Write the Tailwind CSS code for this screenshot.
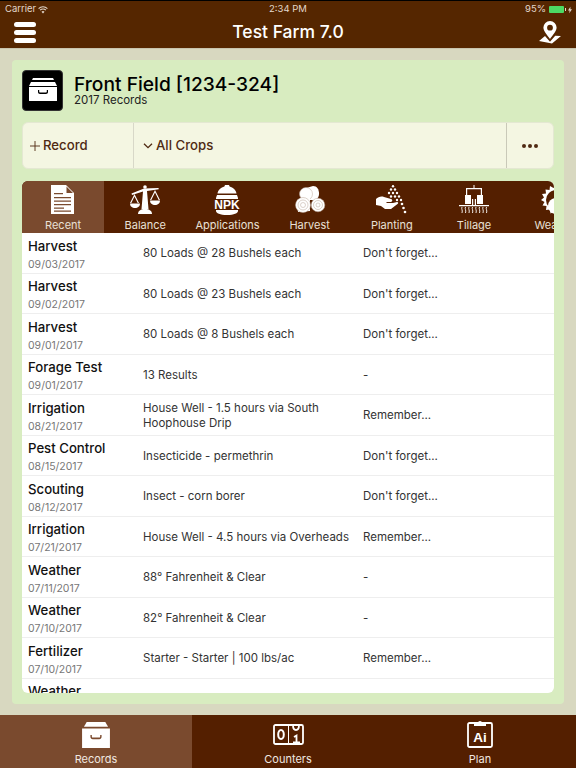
<!DOCTYPE html>
<html lang="en">
<head>
  <meta charset="UTF-8">
  <meta name="viewport" content="width=device-width, initial-scale=1.0">
  <title>Test Farm 7.0</title>
  <script src="https://cdn.jsdelivr.net/npm/@tailwindcss/browser@4"></script>
</head>
<body class="w-[576px] h-[768px] overflow-hidden flex flex-col bg-[#d8d8c0] font-['Inter',sans-serif]">
  <!-- top bar -->
  <header class="h-[48px] shrink-0 bg-[#552600] border-t border-black text-white flex flex-col shadow-[0_1px_0_#c9c4ae]">
    <div class="h-[16px] pt-[1px] flex items-center justify-between pl-[5px] pr-[4px] text-[9.5px] text-[#e2d8cc] relative">
      <div class="flex items-center gap-[2px]">
        <span>Carrier</span>
        <svg width="10" height="8" viewBox="0 0 10 8" fill="none" stroke="#e2d8cc" stroke-width="1.100"><path d="M.6 2.600a6.200 6.200 0 0 1 8.800 0M2.100 4.200a4 4 0 0 1 5.800 0"/><path d="M5 7.600 3.500 5.800a2 2 0 0 1 3 0z" fill="#e2d8cc" stroke="none"/></svg>
      </div>
      <span class="absolute left-0 right-0 text-center">2:34 PM</span>
      <div class="flex items-center">
        <span class="mr-[3px]">95%</span>
        <div class="w-[15px] h-[7px] bg-[#4cd964] rounded-[1px]"></div>
        <div class="w-[1px] h-[3px] bg-[#e2d8cc] ml-[1px]"></div>
        <svg width="4" height="8" viewBox="0 0 5 8" class="ml-[2px]"><path d="M3 0 0 4.600h2L1.600 8 5 3.200H3z" fill="#e2d8cc"/></svg>
      </div>
    </div>
    <div class="flex-1 flex items-center justify-between pl-[14px] pr-[15px] relative">
      <div class="flex flex-col gap-[3px] w-[22px]">
        <div class="h-[5px] rounded-full bg-white"></div>
        <div class="h-[5px] rounded-full bg-white"></div>
        <div class="h-[5px] rounded-full bg-white"></div>
      </div>
      <h1 class="absolute left-0 right-0 text-center text-[17.5px] font-medium">Test Farm 7.0</h1>
      <svg width="22" height="23" viewBox="0 0 22 23" fill="#fff">
        <path fill-rule="evenodd" d="M11 0a6.600 6.600 0 0 0-6.600 6.600C4.400 10.600 9 15 11 18c2-3 6.600-7.400 6.600-11.400A6.600 6.600 0 0 0 11 0zm0 3.800a2.900 2.900 0 1 1 0 5.800 2.900 2.900 0 0 1 0-5.800z"/>
        <path d="M6 15 0 20l13 2.600 9-7.600-5.800-.2-5.200 6z"/>
      </svg>
    </div>
  </header>

  <main class="flex-1 min-h-0 pt-[12px] px-[12px] pb-[11px]">
    <section class="h-full bg-[#d8ecc0] rounded-[4px] px-[10px] pt-[10px] pb-[11px] flex flex-col">
      <!-- field title -->
      <div class="flex items-center gap-[11px] h-[40px] shrink-0">
        <div class="w-[41px] h-[41px] bg-black rounded-[4px] flex items-center justify-center border border-[#333]">
          <svg width="28" height="24" viewBox="0 0 28 24" fill="#fff">
            <path d="M4 0h20l1 2H3z"/>
            <path d="M2 4h24l2 4H0z"/>
            <path d="M0 9h28v14H0zm9 3v2c0 1 .8 2 2 2h6c1.200 0 2-1 2-2v-2h-1.200v1.500c0 .6-.4 1-1 1h-5.600c-.6 0-1-.4-1-1V12z" fill-rule="evenodd"/>
          </svg>
        </div>
        <div class="flex flex-col">
          <h2 class="text-[19.2px] leading-[22px] -mt-[1px] font-medium text-black">Front Field [1234-324]</h2>
          <p class="text-[11.5px] leading-[13px] -mt-[1px] text-[#222]">2017 Records</p>
        </div>
      </div>

      <!-- action bar -->
      <div class="mt-[12px] h-[47px] shrink-0 flex bg-[#f4f6e2] rounded-[6px] border border-[#e4e8d2] text-[#4f2a12] text-[13.2px] font-medium">
        <div class="w-[111px] flex items-center pl-[7px] gap-[3px] border-r border-[#d8d8c8]">
          <svg width="10" height="10" viewBox="0 0 11 11" stroke="#4f2a12" stroke-width="1"><path d="M5.500 0v11M0 5.500h11"/></svg>
          <span class="mt-[1px]">Record</span>
        </div>
        <div class="flex-1 flex items-center pl-[9px] gap-[3px] border-r border-[#c9c9b8]">
          <svg width="10" height="6" viewBox="0 0 10 6" fill="none" stroke="#4f2a12" stroke-width="1.300"><path d="m1 .7 4 4 4-4"/></svg>
          <span class="mt-[1px]">All Crops</span>
        </div>
        <div class="w-[46px] flex items-center justify-center gap-[2px]">
          <div class="w-[4px] h-[4px] rounded-full bg-[#4f2a12]"></div>
          <div class="w-[4px] h-[4px] rounded-full bg-[#4f2a12]"></div>
          <div class="w-[4px] h-[4px] rounded-full bg-[#4f2a12]"></div>
        </div>
      </div>

      <!-- record table -->
      <div class="mt-[12px] flex-1 min-h-0 rounded-[6px] overflow-hidden bg-white flex flex-col">
        <div class="h-[52px] shrink-0 bg-[#541f00] flex text-[#e9e0d6] text-[11px] overflow-hidden">
          <div class="w-[82.2px] shrink-0 bg-[#7a4a2e] flex flex-col items-center justify-between pt-[4px] pb-[1px]">
            <svg width="24" height="30" viewBox="0 0 24 30" fill="#fff">
              <path fill-rule="evenodd" d="M0 0h15l8 8v21H0zM15.500 1.500V8H22zM3 8v1.300h9V8zm0 4v1.300h17V12zm0 3.500v1.300h17v-1.300zm0 3.500v1.300h17V19zm0 3.500v1.300h10v-1.300zm0 3v1.300h17v-1.300z"/>
            </svg>
            <span class="leading-[14px]">Recent</span>
          </div>
          <div class="w-[82.2px] shrink-0 flex flex-col items-center justify-between pt-[4px] pb-[1px]">
            <svg width="30" height="30" viewBox="0 0 30 30" fill="#fff">
              <circle cx="15" cy="2" r="1.800"/>
              <path d="M1.500 8.500 14 3.500l14.500-.5.300 1.300L17 6l1.500 18h-7L13 6.500 2 10z"/>
              <path d="M8 29c0-3 2.500-5 7-5s7 2 7 5z"/>
              <path d="M4.500 9 0 18h1.300l3.200-6.500L7.700 18H9z"/>
              <path d="M0 18.500h10c0 2.800-2.200 4.500-5 4.500s-5-1.700-5-4.500z"/>
              <path d="M25 5l-5 10h1.300L25 7.500l3.700 7.500H30z"/>
              <path d="M20 15.500h10c0 2.800-2.200 4.500-5 4.500s-5-1.700-5-4.500z"/>
            </svg>
            <span class="leading-[14px]">Balance</span>
          </div>
          <div class="w-[82.2px] shrink-0 flex flex-col items-center justify-between pt-[4px] pb-[1px]">
            <svg width="28" height="30" viewBox="0 0 28 30" fill="#fff">
              <path d="M12 0h4l.6 1.500C20 2.500 23 5 23.500 8.500h-19C5 5 8 2.500 11.400 1.500z"/>
              <path d="M4 10h20l1 3v13c0 2-4 4-11 4S3 28 3 26V13z"/>
              <rect x="0" y="14" width="28" height="11" rx="1.500" fill="#541f00"/>
              <text x="14" y="23.500" text-anchor="middle" font-family="Liberation Sans" font-weight="700" font-size="12" fill="#fff">NPK</text>
            </svg>
            <span class="leading-[14px]">Applications</span>
          </div>
          <div class="w-[82.2px] shrink-0 flex flex-col items-center justify-between pt-[4px] pb-[1px]">
            <svg width="32" height="30" viewBox="0 0 32 30" fill="#fff" stroke="#b9a596" stroke-width="0.500">
              <path d="M9 4 19 1c4 0 6 3.500 6 7.500S23 15 19 15H10z" stroke="none"/>
              <circle cx="12" cy="9" r="6.500"/>
              <path d="M3 15 10 13h6v13l-12 1z" stroke="none"/>
              <circle cx="9" cy="20" r="7.500"/><circle cx="9" cy="20" r="5" fill="none"/><circle cx="9" cy="20" r="2.500" fill="none"/>
              <circle cx="24" cy="20" r="6.800"/><circle cx="24" cy="20" r="4.500" fill="none"/><circle cx="24" cy="20" r="2" fill="none"/>
            </svg>
            <span class="leading-[14px]">Harvest</span>
          </div>
          <div class="w-[82.2px] shrink-0 flex flex-col items-center justify-between pt-[4px] pb-[1px]">
            <svg width="32" height="30" viewBox="0 0 32 30" fill="#fff">
              <path d="M0 14c2-2 5-3 8-2l7 2c2 .5 1.500 3-.5 3H10l1 1h6l4-1c1.500 0 1.500 1.500.5 2L15 24H9l-4-3-5-1z"/>
              <circle cx="17" cy="1.300" r="1.200"/>
              <circle cx="15" cy="4.500" r="1.200"/><circle cx="19" cy="4.500" r="1.200"/>
              <circle cx="13" cy="8" r="1.200"/><circle cx="17" cy="8" r="1.200"/><circle cx="21" cy="8" r="1.200"/>
              <circle cx="15" cy="11.500" r="1.200"/><circle cx="19" cy="11.500" r="1.200"/><circle cx="23" cy="11.500" r="1.200"/>
              <circle cx="21" cy="15" r="1.200"/><circle cx="25" cy="15" r="1.200"/>
              <circle cx="26" cy="19" r="1.300"/><circle cx="27.500" cy="23" r="1.300"/><circle cx="29" cy="27" r="1.300"/>
            </svg>
            <span class="leading-[14px]">Planting</span>
          </div>
          <div class="w-[82.2px] shrink-0 flex flex-col items-center justify-between pt-[4px] pb-[1px]">
            <svg width="32" height="30" viewBox="0 0 32 30" fill="#fff">
              <path d="M15.500 0h1v3h-1z"/>
              <path d="M8 3h16v1.200H8zM8 4h1.200v6H8zM22.800 4H24v6h-1.200z"/>
              <path d="M7 10h6v9H7zM19 10h6v9h-6z"/>
              <path d="M14 14h1.200v6H14zM16.800 14H18v6h-1.200z"/>
              <path d="M1 20h30v1.300H1z"/>
              <path d="M4 22c-1 2 1 3 0 6M7.500 22c-1 2 1 3 0 6M11 22c-1 2 1 3 0 6M14.500 22c-1 2 1 3 0 6M18 22c-1 2 1 3 0 6M21.500 22c-1 2 1 3 0 6M25 22c-1 2 1 3 0 6M28.500 22c-1 2 1 3 0 6" stroke="#fff" stroke-width="0.900" fill="none"/>
            </svg>
            <span class="leading-[14px]">Tillage</span>
          </div>
          <div class="w-[82.2px] shrink-0 flex flex-col items-center justify-between pt-[4px] pb-[1px]">
            <svg width="30" height="30" viewBox="0 0 30 30" fill="#fff">
              <path d="M15 0l2 3.500 3.500-2 .5 4 4-.5-.5 4 4 .5-2 3.500 3 2.500-3 2.500 2 3.500-4 .5.500 4-4-.5-.5 4-3.500-2L15 30l-2-3.500-3.500 2-.5-4-4 .5.500-4-4-.5 2-3.500L0 15l3-2.500-2-3.500 4-.5-.5-4 4 .5.500-4 3.500 2z"/>
              <circle cx="15" cy="15" r="10" fill="#541f00"/>
              <circle cx="15" cy="21" r="8"/>
            </svg>
            <span class="leading-[14px] whitespace-nowrap">Weather</span>
          </div>
        </div>

        <div class="flex-1 min-h-0 overflow-hidden text-[11.5px] text-[#333]">
          <div class="h-[40.5px] pt-[2px] flex items-center border-b border-[#eeeeee]">
            <div class="w-[121px] shrink-0 pl-[6px] mt-[2px]"><p class="text-[13.2px] leading-[17px] font-medium text-[#111]">Harvest</p><p class="text-[10.5px] leading-[15px] mt-[2px] text-[#777]">09/03/2017</p></div>
            <div class="w-[220px] shrink-0 pr-[8px] leading-[15px]">80 Loads @ 28 Bushels each</div>
            <div>Don't forget...</div>
          </div>
          <div class="h-[40.5px] pt-[2px] flex items-center border-b border-[#eeeeee]">
            <div class="w-[121px] shrink-0 pl-[6px] mt-[2px]"><p class="text-[13.2px] leading-[17px] font-medium text-[#111]">Harvest</p><p class="text-[10.5px] leading-[15px] mt-[2px] text-[#777]">09/02/2017</p></div>
            <div class="w-[220px] shrink-0 pr-[8px] leading-[15px]">80 Loads @ 23 Bushels each</div>
            <div>Don't forget...</div>
          </div>
          <div class="h-[40.5px] pt-[2px] flex items-center border-b border-[#eeeeee]">
            <div class="w-[121px] shrink-0 pl-[6px] mt-[2px]"><p class="text-[13.2px] leading-[17px] font-medium text-[#111]">Harvest</p><p class="text-[10.5px] leading-[15px] mt-[2px] text-[#777]">09/01/2017</p></div>
            <div class="w-[220px] shrink-0 pr-[8px] leading-[15px]">80 Loads @ 8 Bushels each</div>
            <div>Don't forget...</div>
          </div>
          <div class="h-[40.5px] pt-[2px] flex items-center border-b border-[#eeeeee]">
            <div class="w-[121px] shrink-0 pl-[6px] mt-[2px]"><p class="text-[13.2px] leading-[17px] font-medium text-[#111]">Forage Test</p><p class="text-[10.5px] leading-[15px] mt-[2px] text-[#777]">09/01/2017</p></div>
            <div class="w-[220px] shrink-0 pr-[8px] leading-[15px]">13 Results</div>
            <div>-</div>
          </div>
          <div class="h-[40.5px] pt-[2px] flex items-center border-b border-[#eeeeee]">
            <div class="w-[121px] shrink-0 pl-[6px] mt-[2px]"><p class="text-[13.2px] leading-[17px] font-medium text-[#111]">Irrigation</p><p class="text-[10.5px] leading-[15px] mt-[2px] text-[#777]">08/21/2017</p></div>
            <div class="w-[220px] shrink-0 pr-[8px] leading-[15px]">House Well - 1.5 hours via South Hoophouse Drip</div>
            <div>Remember...</div>
          </div>
          <div class="h-[40.5px] pt-[2px] flex items-center border-b border-[#eeeeee]">
            <div class="w-[121px] shrink-0 pl-[6px] mt-[2px]"><p class="text-[13.2px] leading-[17px] font-medium text-[#111]">Pest Control</p><p class="text-[10.5px] leading-[15px] mt-[2px] text-[#777]">08/15/2017</p></div>
            <div class="w-[220px] shrink-0 pr-[8px] leading-[15px]">Insecticide - permethrin</div>
            <div>Don't forget...</div>
          </div>
          <div class="h-[40.5px] pt-[2px] flex items-center border-b border-[#eeeeee]">
            <div class="w-[121px] shrink-0 pl-[6px] mt-[2px]"><p class="text-[13.2px] leading-[17px] font-medium text-[#111]">Scouting</p><p class="text-[10.5px] leading-[15px] mt-[2px] text-[#777]">08/12/2017</p></div>
            <div class="w-[220px] shrink-0 pr-[8px] leading-[15px]">Insect - corn borer</div>
            <div>Don't forget...</div>
          </div>
          <div class="h-[40.5px] pt-[2px] flex items-center border-b border-[#eeeeee]">
            <div class="w-[121px] shrink-0 pl-[6px] mt-[2px]"><p class="text-[13.2px] leading-[17px] font-medium text-[#111]">Irrigation</p><p class="text-[10.5px] leading-[15px] mt-[2px] text-[#777]">07/21/2017</p></div>
            <div class="w-[220px] shrink-0 pr-[8px] leading-[15px]">House Well - 4.5 hours via Overheads</div>
            <div>Remember...</div>
          </div>
          <div class="h-[40.5px] pt-[2px] flex items-center border-b border-[#eeeeee]">
            <div class="w-[121px] shrink-0 pl-[6px] mt-[2px]"><p class="text-[13.2px] leading-[17px] font-medium text-[#111]">Weather</p><p class="text-[10.5px] leading-[15px] mt-[2px] text-[#777]">07/11/2017</p></div>
            <div class="w-[220px] shrink-0 pr-[8px] leading-[15px]">88° Fahrenheit &amp; Clear</div>
            <div>-</div>
          </div>
          <div class="h-[40.5px] pt-[2px] flex items-center border-b border-[#eeeeee]">
            <div class="w-[121px] shrink-0 pl-[6px] mt-[2px]"><p class="text-[13.2px] leading-[17px] font-medium text-[#111]">Weather</p><p class="text-[10.5px] leading-[15px] mt-[2px] text-[#777]">07/10/2017</p></div>
            <div class="w-[220px] shrink-0 pr-[8px] leading-[15px]">82° Fahrenheit &amp; Clear</div>
            <div>-</div>
          </div>
          <div class="h-[40.5px] pt-[2px] flex items-center border-b border-[#eeeeee]">
            <div class="w-[121px] shrink-0 pl-[6px] mt-[2px]"><p class="text-[13.2px] leading-[17px] font-medium text-[#111]">Fertilizer</p><p class="text-[10.5px] leading-[15px] mt-[2px] text-[#777]">07/10/2017</p></div>
            <div class="w-[220px] shrink-0 pr-[8px] leading-[15px]">Starter - Starter | 100 lbs/ac</div>
            <div>Remember...</div>
          </div>
          <div class="h-[40.5px] pt-[2px] flex items-center border-b border-[#eeeeee]">
            <div class="w-[121px] shrink-0 pl-[6px] mt-[2px]"><p class="text-[13.2px] leading-[17px] font-medium text-[#111]">Weather</p><p class="text-[10.5px] leading-[15px] mt-[2px] text-[#777]">07/09/2017</p></div>
            <div class="w-[220px] shrink-0 pr-[8px] leading-[15px]">80° Fahrenheit &amp; Clear</div>
            <div>-</div>
          </div>
        </div>
      </div>
    </section>
  </main>

  <!-- bottom tabs -->
  <nav class="h-[53px] shrink-0 bg-[#541f00] flex text-[#f0e8e0] text-[11px]">
    <div class="flex-1 bg-[#7a4a2e] flex flex-col items-center justify-end pb-[2px]">
      <svg width="30" height="26" viewBox="0 0 30 28" fill="#fff" class="mb-[4px]">
        <path d="M5 0h20l3 5H2z"/>
        <path fill-rule="evenodd" d="M0 7h30v21H0zm9 7v2c0 1.500 1 2.500 2.500 2.500h7c1.500 0 2.500-1 2.500-2.500v-2h-1.500v1.500c0 .8-.5 1.300-1.300 1.300h-6.400c-.8 0-1.300-.5-1.300-1.300V14z"/>
      </svg>
      <span class="leading-[14px]">Records</span>
    </div>
    <div class="flex-1 flex flex-col items-center justify-end pb-[2px]">
      <svg width="31" height="21" viewBox="0 0 31 21" fill="none" class="mb-[7px]">
        <rect x="1" y="1" width="29" height="19" rx="1.500" stroke="#fff" stroke-width="1.800"/>
        <path d="M15.500 1v19" stroke="#fff" stroke-width="1"/>
        <ellipse cx="8" cy="10.500" rx="2.800" ry="4.500" stroke="#fff" stroke-width="2"/>
        <path d="M20 1c0 3 1 5 3 5s3-2 3-5" stroke="#fff" stroke-width="1.800"/>
        <path d="M21 13l2.500-1.500V19M20 18.500h7" stroke="#fff" stroke-width="1.800"/>
      </svg>
      <span class="leading-[14px]">Counters</span>
    </div>
    <div class="flex-1 flex flex-col items-center justify-end pb-[2px]">
      <svg width="26" height="29" viewBox="0 0 26 29" fill="none" class="mb-[4px]">
        <rect x="1" y="4" width="24" height="24" rx="1.500" stroke="#fff" stroke-width="1.800"/>
        <path d="M7 7V4h4a2 2 0 0 1 4 0h4v3z" fill="#fff"/>
        <text x="13" y="23" text-anchor="middle" font-family="Liberation Sans" font-weight="700" font-size="13.500" fill="#fff">Ai</text>
      </svg>
      <span class="leading-[14px]">Plan</span>
    </div>
  </nav>
</body>
</html>
